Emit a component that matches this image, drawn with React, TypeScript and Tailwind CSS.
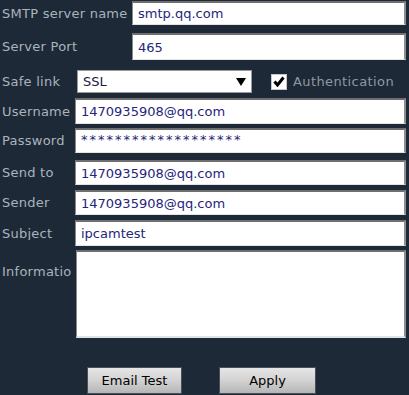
import React from "react";

const inputCls =
  "bg-white border-t-2 border-t-[#6f6f6f] border-l border-l-[#8a8a8a] border-r-2 border-r-[#8f8f8f] border-b border-b-[#e4e4e4] text-[#25257a] flex items-center pl-[5px] box-border";

const Label = ({ children, w }: { children: React.ReactNode; w: string }) => (
  <div className={`${w} shrink-0 pl-[2px] text-[#aab4be] whitespace-nowrap overflow-hidden tracking-[0.25px]`}>{children}</div>
);

export default function App() {
  return (
    <div
      className="w-[409px] h-[395px] bg-[#1d2937] overflow-hidden flex flex-col text-[13px] leading-none"
      style={{ fontFamily: '"DejaVu Sans", Verdana, sans-serif' }}
    >
      <div className="h-[1px]" />
      {/* SMTP server name */}
      <div className="flex items-center h-[24px]">
        <Label w="w-[132px]">SMTP server name</Label>
        <div className={`${inputCls} w-[274px] h-[24px]`}>smtp.qq.com</div>
      </div>
      {/* Server Port */}
      <div className="flex items-center h-[27px] mt-[8px]">
        <Label w="w-[132px]">Server Port</Label>
        <div className={`${inputCls} w-[274px] h-[27px]`}>465</div>
      </div>
      {/* Safe link */}
      <div className="flex items-center h-[23px] mt-[10px]">
        <Label w="w-[77px]">Safe link</Label>
        <div className="w-[175px] h-[23px] bg-white border border-[#9a9a9a] flex items-center pl-[5px] text-[#1a1a40] box-border">
          <span className="flex-1">SSL</span>
          <svg width="10" height="9" viewBox="0 0 10 9" className="mr-[5px]">
            <path d="M0 1 L10 1 L5 9 Z" fill="#000" />
          </svg>
        </div>
        <div className="ml-[19px] w-[16px] h-[16px] bg-white border border-[#c8c8c8] flex items-center justify-center box-border">
          <svg width="12" height="11" viewBox="0 0 12 11">
            <path d="M1.5 5.5 L4.5 9 L10.5 1.5" stroke="#000" strokeWidth="3" fill="none" />
          </svg>
        </div>
        <span className="ml-[6px] text-[#8f99a3] tracking-[0.4px]">Authentication</span>
      </div>
      {/* Username */}
      <div className="flex items-center h-[26px] mt-[5px]">
        <Label w="w-[75px]">Username</Label>
        <div className={`${inputCls} w-[331px] h-[26px]`}>1470935908@qq.com</div>
      </div>
      {/* Password */}
      <div className="flex items-center h-[25px] mt-[4px]">
        <Label w="w-[75px]">Password</Label>
        <div className={`${inputCls} w-[331px] h-[25px] !items-start pt-[3px] text-[#3a3aa6] tracking-[2px]`}>
          *******************
        </div>
      </div>
      {/* Send to */}
      <div className="flex items-center h-[25px] mt-[7px]">
        <Label w="w-[75px]">Send to</Label>
        <div className={`${inputCls} w-[331px] h-[25px]`}>1470935908@qq.com</div>
      </div>
      {/* Sender */}
      <div className="flex items-center h-[25px] mt-[5px]">
        <Label w="w-[75px]">Sender</Label>
        <div className={`${inputCls} w-[331px] h-[25px]`}>1470935908@qq.com</div>
      </div>
      {/* Subject */}
      <div className="flex items-center h-[26px] mt-[5px]">
        <Label w="w-[75px]">Subject</Label>
        <div className={`${inputCls} w-[331px] h-[26px]`}>ipcamtest</div>
      </div>
      {/* Information */}
      <div className="flex items-start h-[88px] mt-[4px]">
        <div className="w-[76px] shrink-0 pl-[2px] pt-[15px] text-[#aab4be] whitespace-nowrap overflow-hidden tracking-[0.25px]">
          Informatio
        </div>
        <div className="w-[330px] h-[88px] bg-white border-t-2 border-t-[#6f6f6f] border-l border-l-[#8a8a8a] border-r-2 border-r-[#8f8f8f] border-b-2 border-b-[#dfe4ea] box-border" />
      </div>
      {/* Buttons */}
      <div className="flex items-center mt-[29px] pl-[87px] gap-[37px]">
        <div className="w-[95px] h-[27px] bg-gradient-to-b from-[#e6e6e6] via-[#d2d2d2] to-[#b6b6b6] border border-[#4a4f55] flex items-center justify-center text-black box-border">
          Email Test
        </div>
        <div className="w-[97px] h-[27px] bg-gradient-to-b from-[#e6e6e6] via-[#d2d2d2] to-[#b6b6b6] border border-[#4a4f55] flex items-center justify-center text-black box-border">
          Apply
        </div>
      </div>
    </div>
  );
}
